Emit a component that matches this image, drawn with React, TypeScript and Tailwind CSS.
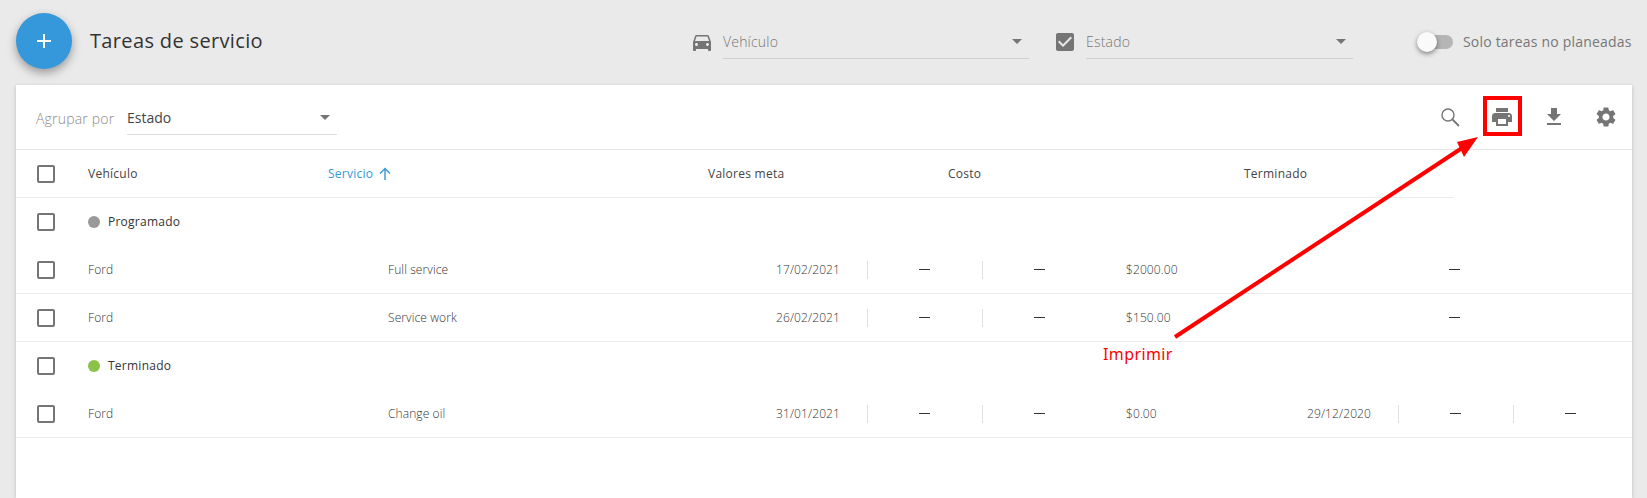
import React from "react";

const P = {
  car: "M18.92 6.01C18.72 5.42 18.16 5 17.5 5h-11c-.66 0-1.21.42-1.42 1.01L3 12v8c0 .55.45 1 1 1h1c.55 0 1-.45 1-1v-1h12v1c0 .55.45 1 1 1h1c.55 0 1-.45 1-1v-8l-2.08-5.99zM6.5 16c-.83 0-1.5-.67-1.5-1.5S5.67 13 6.5 13s1.5.67 1.5 1.5S7.33 16 6.5 16zm11 0c-.83 0-1.5-.67-1.5-1.5s.67-1.5 1.5-1.5 1.5.67 1.5 1.5-.67 1.5-1.5 1.5zM5 11l1.5-4.5h11L19 11H5z",
  check: "M19 3H5c-1.11 0-2 .9-2 2v14c0 1.1.89 2 2 2h14c1.11 0 2-.9 2-2V5c0-1.1-.89-2-2-2zm-9 14l-5-5 1.41-1.41L10 14.17l7.59-7.59L19 8l-9 9z",
  print: "M19 8H5c-1.66 0-3 1.34-3 3v6h4v4h12v-4h4v-6c0-1.66-1.34-3-3-3zm-3 11H8v-5h8v5zm3-7c-.55 0-1-.45-1-1s.45-1 1-1 1 .45 1 1-.45 1-1 1zm-1-9H6v4h12V3z",
  download: "M19 9h-4V3H9v6H5l7 7 7-7zM5 18v2h14v-2H5z",
  gear: "M19.14 12.94c.04-.3.06-.61.06-.94 0-.32-.02-.64-.07-.94l2.03-1.58c.18-.14.23-.41.12-.61l-1.92-3.32c-.12-.22-.37-.29-.59-.22l-2.39.96c-.5-.38-1.03-.7-1.62-.94l-.36-2.54c-.04-.24-.24-.41-.48-.41h-3.84c-.24 0-.43.17-.47.41l-.36 2.54c-.59.24-1.13.57-1.62.94l-2.39-.96c-.22-.08-.47 0-.59.22L2.74 8.87c-.12.21-.08.47.12.61l2.03 1.58c-.05.3-.09.63-.09.94s.02.64.07.94l-2.03 1.58c-.18.14-.23.41-.12.61l1.92 3.32c.12.22.37.29.59.22l2.39-.96c.5.38 1.03.7 1.62.94l.36 2.54c.05.24.24.41.48.41h3.84c.24 0 .44-.17.47-.41l.36-2.54c.59-.24 1.13-.56 1.62-.94l2.39.96c.22.08.47 0 .59-.22l1.92-3.32c.12-.22.07-.47-.12-.61l-2.01-1.58zM12 15.6c-1.98 0-3.6-1.62-3.6-3.6s1.62-3.6 3.6-3.6 3.6 1.62 3.6 3.6-1.62 3.6-3.6 3.6z",
};

function Icon({ d, className }: { d: string; className: string }) {
  return (
    <svg viewBox="0 0 24 24" className={className} fill="currentColor">
      <path d={d} />
    </svg>
  );
}

function Caret() {
  return <span className="w-0 h-0 border-l-[5px] border-r-[5px] border-t-[5px] border-l-transparent border-r-transparent border-t-[#757575]" />;
}

function Box() {
  return <span className="block w-[18px] h-[18px] rounded-[2px] border-2 border-[#757575] bg-white" />;
}

function Select({ label, className }: { label: string; className: string }) {
  return (
    <div className={`h-[34px] flex items-center justify-between pr-[7px] border-b border-[#cfcfcf] mt-[1px] ${className}`}>
      <span className="text-sm font-light tracking-[0.2px] text-[#777]">{label}</span>
      <Caret />
    </div>
  );
}

function Dash({ line }: { line: boolean }) {
  return (
    <div className={`h-[18px] flex items-center justify-center pr-[2px] ${line ? "border-l border-[#e0e0e0]" : ""}`}>
      <span className="w-[11px] h-[1px] bg-[#333]" />
    </div>
  );
}

const rowGrid = "grid grid-cols-[51px_300px_479px_115px_115px_301px_115px_115px] items-center pl-[21px] h-[48px] text-xs font-light tracking-[0.1px] text-[#333]";

function GroupRow({ label, dot, border }: { label: string; dot: string; border?: boolean }) {
  return (
    <div className={`flex items-center pl-[21px] h-[48px] ${border ? "border-b border-[#ebebeb]" : ""}`}>
      <span className="w-[51px]"><Box /></span>
      <span className={`w-3 h-3 rounded-full mr-2 ${dot}`} />
      <span className="text-xs font-medium text-[#333] tracking-[0.25px]">{label}</span>
    </div>
  );
}

function DataRow({ service, date, cost, done, full }: { service: string; date: string; cost: string; done?: string; full?: boolean }) {
  return (
    <div className={`${rowGrid} border-b border-[#ebebeb]`}>
      <Box />
      <span>Ford</span>
      <div className="flex justify-between pr-[27px]">
        <span>{service}</span>
        <span>{date}</span>
      </div>
      <Dash line />
      <Dash line />
      <div className="flex justify-between pl-[29px] pr-[27px]">
        <span>{cost}</span>
        <span>{done}</span>
      </div>
      <Dash line={!!full} />
      {full ? <Dash line /> : <span />}
    </div>
  );
}

export default function App() {
  return (
    <div className="relative w-[1647px] h-[498px] overflow-hidden bg-[#eaeaea] font-['Open_Sans',sans-serif]">
      <div className="h-[85px] flex items-start pl-4 pt-[13px]">
        <button className="w-14 h-14 rounded-full bg-[#3498db] text-white flex items-center justify-center shadow-[0_4px_10px_rgba(0,0,0,0.35)]">
          <svg viewBox="0 0 16 16" className="w-4 h-4" stroke="currentColor" strokeWidth="2" fill="none">
            <path d="M8 1v14M1 8h14" />
          </svg>
        </button>
        <h1 className="ml-[18px] mt-[14px] text-xl leading-7 text-[#333] tracking-[0.35px]">Tareas de servicio</h1>
        <div className="ml-[427px] flex items-start mt-[11px]">
          <Icon d={P.car} className="w-6 h-6 text-[#757575] mt-[6px] mr-[9px]" />
          <Select label="Vehículo" className="w-[306px]" />
          <Icon d={P.check} className="w-6 h-6 text-[#757575] mt-[6px] ml-6 mr-[9px]" />
          <Select label="Estado" className="w-[267px]" />
          <div className="relative ml-[65px] w-[35px] mt-[11px] h-[14px] rounded-full bg-[#b5b5b5]">
            <span className="absolute -left-[1px] -top-[3px] w-5 h-5 rounded-full bg-[#fafafa] shadow-[0_2px_5px_rgba(0,0,0,0.45)]" />
          </div>
          <span className="ml-[10px] mt-[8px] text-sm tracking-[0.2px] text-[#777] whitespace-nowrap">Solo tareas no planeadas</span>
        </div>
      </div>

      <div className="ml-4 w-[1616px] h-[413px] bg-white shadow-[0_1px_4px_rgba(0,0,0,0.2)]">
        <div className="h-[65px] flex items-start border-b border-[#e4e4e4] pl-5">
          <span className="mt-[24px] text-sm font-light tracking-[0.2px] text-[#8a8a8a] w-[91px]">Agrupar por</span>
          <div className="mt-[16px] w-[210px] h-[34px] flex items-center justify-between pr-[7px] border-b border-[#dcdcdc]">
            <span className="text-sm text-[#444]">Estado</span>
            <Caret />
          </div>
          <div className="ml-auto flex items-center text-[#757575] h-full pr-[14px]">
            <svg viewBox="0 0 20 20" className="w-5 h-5 mr-[30px] mb-[1px]" fill="none" stroke="currentColor">
              <circle cx="8" cy="8" r="6" strokeWidth="1.4" />
              <path d="M12.5 12.5 19 19" strokeWidth="1.8" />
            </svg>
            <Icon d={P.print} className="w-6 h-6 mr-7" />
            <Icon d={P.download} className="w-6 h-6 mr-7" />
            <Icon d={P.gear} className="w-6 h-6" />
          </div>
        </div>

        <div className="w-[1437px] h-[48px] grid grid-cols-[51px_240px_380px_240px_296px_209px] items-center pl-[21px] border-b border-[#ebebeb] text-xs font-medium tracking-[0.25px] text-[#444]">
          <Box />
          <span>Vehículo</span>
          <span className="flex items-center gap-[5px] text-[#3498db]">
            Servicio
            <svg viewBox="0 0 14 14" className="w-[14px] h-[14px]" stroke="currentColor" strokeWidth="1.4" fill="none">
              <path d="M7 13V1.5M2 6.5 7 1.5l5 5" />
            </svg>
          </span>
          <span>Valores meta</span>
          <span>Costo</span>
          <span>Terminado</span>
        </div>

        <GroupRow label="Programado" dot="bg-[#999999]" />
        <DataRow service="Full service" date="17/02/2021" cost="$2000.00" />
        <DataRow service="Service work" date="26/02/2021" cost="$150.00" />
        <GroupRow label="Terminado" dot="bg-[#8bc34a]" />
        <DataRow service="Change oil" date="31/01/2021" cost="$0.00" done="29/12/2020" full />
      </div>

      <div className="absolute left-[1483px] top-[96px] w-[39px] h-[40px] border-4 border-[#ff0000]" />
      <svg className="absolute inset-0 pointer-events-none" width="1647" height="498" viewBox="0 0 1647 498">
        <path d="M1175 337 L1462 148" stroke="#ff0000" strokeWidth="4" fill="none" />
        <path d="M1478 137 L1457 142 L1464 157 Z" fill="#ff0000" />
      </svg>
      <span className="absolute left-[1103px] top-[342px] text-base leading-6 tracking-[0.4px] font-['Noto_Sans',sans-serif] text-[#ff0000]">Imprimir</span>
    </div>
  );
}
